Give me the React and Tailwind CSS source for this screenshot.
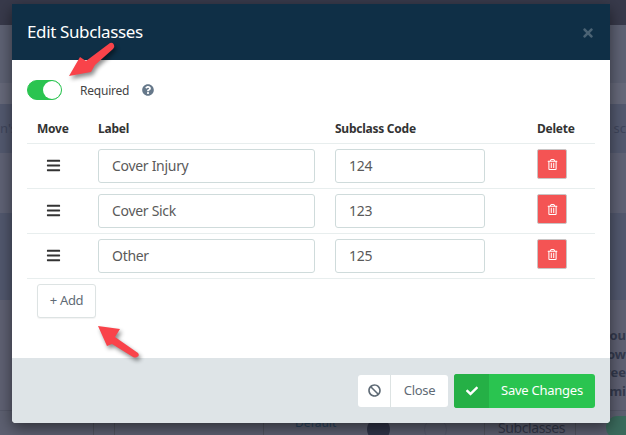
import { FaBars, FaBan, FaCheck, FaQuestionCircle, FaRegTrashAlt, FaTimes } from "react-icons/fa";

const ROWS = [
  { label: "Cover Injury", code: "124" },
  { label: "Cover Sick", code: "123" },
  { label: "Other", code: "125" },
];

const BANDS = [
  { h: "h-[58px]", bg: "bg-[#5e6274]" },
  { h: "h-[21px]", bg: "bg-[#66697a]" },
  { h: "h-[49px]", bg: "bg-[#53596f]", text: true },
  { h: "h-[60px]", bg: "bg-[#5f6275]" },
  { h: "h-[87px]", bg: "bg-[#52586e]" },
];

function Arrow({ className, points }) {
  return (
    <svg className={className} width="90" height="70" viewBox="0 0 90 70" fill="none">
      <path d={points} fill="#f9434a" />
    </svg>
  );
}

function Row({ label, code }) {
  return (
    <div className="grid grid-cols-[61px_237px_202px_68px] h-[45px] border-b border-[#e8eeee] pt-[5px]">
      <div className="pl-[19px] pt-[9px] text-[15px] text-[#333]">
        <FaBars />
      </div>
      <div className="pl-[10px]">
        <input
          readOnly
          value={label}
          className="w-[217px] h-[34px] px-[13px] pb-[2px] border border-[#cfdbdb] rounded-[3px] text-[14px] tracking-[-0.3px] text-[#5a5a5a] outline-none"
        />
      </div>
      <div className="pl-[10px]">
        <input
          readOnly
          value={code}
          className="w-[150px] h-[34px] px-[13px] pb-[2px] border border-[#cfdbdb] rounded-[3px] text-[14px] tracking-[-0.3px] text-[#5a5a5a] outline-none"
        />
      </div>
      <div className="pl-[10px]">
        <button className="w-[30px] h-[30px] flex items-center justify-center bg-[#f45454] border border-[#c9c4c4] rounded-[2px] text-white text-[11px]">
          <FaRegTrashAlt />
        </button>
      </div>
    </div>
  );
}

export default function App() {
  return (
    <div className="relative w-[626px] h-[435px] overflow-hidden flex flex-col bg-[#5f6173] font-['Noto_Sans',sans-serif]">
      {/* page behind the backdrop */}
      <div className="h-[25px] bg-[#383a4b] shrink-0" />
      {BANDS.map((b, i) => (
        <div key={i} className={`${b.h} ${b.bg} shrink-0 flex items-center justify-between text-[13px] text-[#3f465c]`}>
          {b.text && (
            <>
              <span>n's</span>
              <span>s sc</span>
            </>
          )}
        </div>
      ))}
      <div className="flex-1 flex flex-col items-end pt-[26px] text-[13px] leading-[18.5px] font-bold text-[#343a4e]">
        <span>Cou</span>
        <span>ow</span>
        <span>wee</span>
        <span>imi</span>
      </div>
      <div className="h-[25px] shrink-0 bg-[#5d6071] border-t border-[#555869] flex items-center text-[#2b3a55]">
        <div className="w-[94px] h-full border-r border-[#50535f]" />
        <div className="w-[21px] h-full border-r border-[#50535f]" />
        <div className="w-[149px] h-full border-r border-[#50535f]" />
        <div className="w-[221px] h-full border-r border-[#50535f] relative">
          <span className="absolute left-[31px] top-[5px] text-[12px] leading-[14px] text-[#2a4560]">Default</span>
          <span className="absolute left-[103px] top-[7px] w-[23px] h-[23px] rounded-full bg-[#2f3448]" />
          <span className="absolute left-[160px] top-[7px] w-[23px] h-[23px] rounded-full border border-[#54576a]" />
        </div>
        <div className="w-[91px] h-full border-r border-[#50535f] pl-[13px] pt-[9px] text-[14px] leading-[15px] tracking-[-0.4px] text-[#33384a]">Subclasses</div>
        <div className="ml-[30px] w-[20px] h-[23px] mt-[8px] rounded-l-full bg-[#3a6a5c]" />
      </div>

      <div className="absolute left-[12px] top-[4px] w-[598px] h-[419px] flex flex-col bg-white rounded-b-[4px] shadow-[0_5px_15px_rgba(0,0,0,0.5)]">
        <div className="h-[56px] shrink-0 bg-[#0f2f46] flex items-center justify-between px-[15px]">
          <h2 className="text-[17px] tracking-[-0.37px] text-white">Edit Subclasses</h2>
          <FaTimes className="text-[#4b6374] text-[14px] mt-[2px]" />
        </div>

        <div className="flex-1 px-[15px]">
          <div className="flex items-center mt-[20px] h-[20px]">
            <div className="w-[35px] h-[20px] rounded-full bg-[#2ac450] border border-[#2ac450] flex justify-end">
              <div className="w-[18px] h-[18px] rounded-full bg-white" />
            </div>
            <span className="ml-[18px] mt-[1px] text-[12px] tracking-[-0.22px] text-[#444]">Required</span>
            <FaQuestionCircle className="ml-[13px] text-[12px] text-[#66788a]" />
          </div>

          <div className="mt-[20px] grid grid-cols-[61px_237px_202px_68px] h-[24px] border-b border-[#e8eeee] text-[12px] tracking-[-0.25px] font-bold text-[#333]">
            <div className="pl-[10px]">Move</div>
            <div className="pl-[10px]">Label</div>
            <div className="pl-[10px]">Subclass Code</div>
            <div className="pl-[10px]">Delete</div>
          </div>

          {ROWS.map((r) => (
            <Row key={r.code} label={r.label} code={r.code} />
          ))}

          <button className="mt-[5px] ml-[10px] w-[59px] h-[34px] bg-white border border-[#dde3e3] rounded-[3px] text-[13px] tracking-[-0.3px] text-[#5f6b76] shadow-[0_1px_1px_rgba(0,0,0,0.05)]">
            + Add
          </button>
        </div>

        <div className="h-[65px] shrink-0 bg-[#dee4e7] rounded-b-[4px] flex items-center justify-end gap-[6px] pr-[15px]">
          <button className="flex h-[32px] w-[90px] bg-white rounded-[3px] text-[13px] tracking-[-0.3px] text-[#5f6b76]">
            <span className="w-[33px] h-full flex items-center justify-center border-r border-[#dde3e3] text-[13px]">
              <FaBan />
            </span>
            <span className="flex-1 h-full flex items-center justify-center">Close</span>
          </button>
          <button className="flex h-[34px] w-[141px] bg-[#2ac450] rounded-[3px] text-[13px] tracking-[-0.25px] text-white">
            <span className="w-[35px] h-full flex items-center justify-center bg-[#25b046] rounded-l-[3px] text-[12px]">
              <FaCheck />
            </span>
            <span className="flex-1 h-full flex items-center justify-center">Save Changes</span>
          </button>
        </div>
      </div>

      {/* annotation arrows */}
      <Arrow
        className="absolute left-[60px] top-[36px] drop-shadow-[2px_3px_2px_rgba(0,0,0,0.45)]"
        points="M9 40 L20 21 L26 25 L50 7 Q53 6 54 9 Q55 11 53 13 L35 29 L31 36 Z"
      />
      <Arrow
        className="absolute left-[90px] top-[318px] drop-shadow-[2px_3px_2px_rgba(0,0,0,0.45)]"
        points="M8 8 L30 11 L25 19 L48 35 Q50 38 47 39 Q45 40 43 39 L22 26 L17 28 Z"
      />
    </div>
  );
}
